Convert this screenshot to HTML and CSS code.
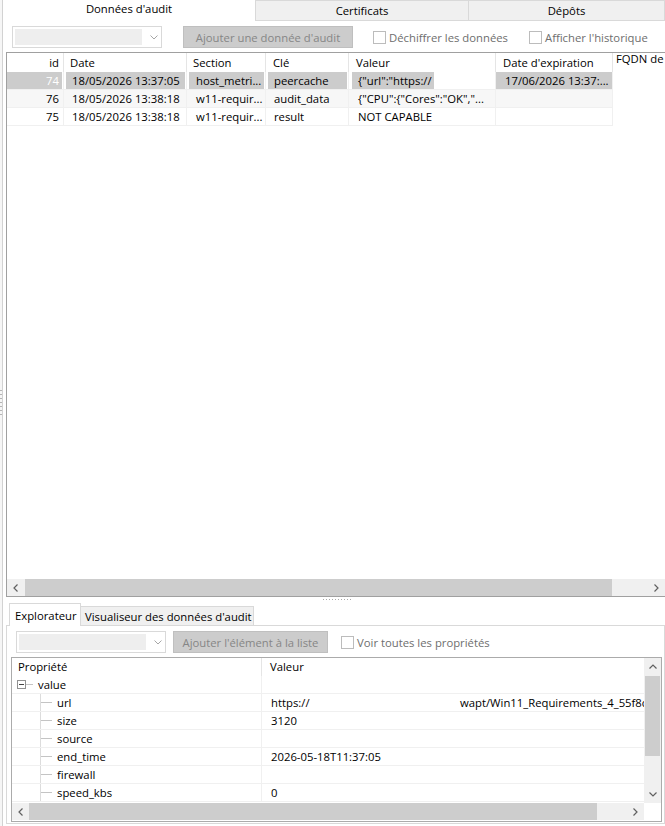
FILE: index.html
```html
<!DOCTYPE html>
<html lang="fr">
<head>
<meta charset="utf-8">
<title>Données d'audit</title>
<link rel="stylesheet" href="styles.css">
</head>
<body>
<div class="window">
  <div class="edge"><div class="grip"></div></div>
  <div class="main">
    <div class="tabs">
      <div class="tab tab-active">Données d'audit</div>
      <div class="tab tab-cert">Certificats</div>
      <div class="tab tab-depots">Dépôts</div>
    </div>

    <div class="toolbar">
      <div class="combo">
        <div class="combo-field"></div>
        <svg class="combo-chev" width="8" height="5" viewBox="0 0 8 5"><polyline points="0.5,0.5 4,4 7.5,0.5" fill="none" stroke="#a6a6a6" stroke-width="1"/></svg>
      </div>
      <div class="btn btn-audit">Ajouter une donnée d'audit</div>
      <div class="check check-decrypt"><span class="box"></span>Déchiffrer les données</div>
      <div class="check"><span class="box"></span>Afficher l'historique</div>
    </div>

    <div class="grid">
      <div class="grid-body">
        <div class="row head">
          <div class="c c-id">id</div>
          <div class="c c-date">Date</div>
          <div class="c c-sec">Section</div>
          <div class="c c-key">Clé</div>
          <div class="c c-val">Valeur</div>
          <div class="c c-exp">Date d'expiration</div>
          <div class="c c-fqdn">FQDN de</div>
        </div>
        <div class="row r sel">
          <div class="c c-id">74</div>
          <div class="c c-date">18/05/2026 13:37:05</div>
          <div class="c c-sec">host_metri...</div>
          <div class="c c-key">peercache</div>
          <div class="c c-val"><span class="hl">{"url":"https://</span></div>
          <div class="c c-exp">17/06/2026 13:37:...</div>
          <div class="c c-fqdn"></div>
        </div>
        <div class="row r alt">
          <div class="c c-id">76</div>
          <div class="c c-date">18/05/2026 13:38:18</div>
          <div class="c c-sec">w11-requir...</div>
          <div class="c c-key">audit_data</div>
          <div class="c c-val">{"CPU":{"Cores":"OK","...</div>
          <div class="c c-exp"></div>
          <div class="c c-fqdn"></div>
        </div>
        <div class="row r">
          <div class="c c-id">75</div>
          <div class="c c-date">18/05/2026 13:38:18</div>
          <div class="c c-sec">w11-requir...</div>
          <div class="c c-key">result</div>
          <div class="c c-val">NOT CAPABLE</div>
          <div class="c c-exp"></div>
          <div class="c c-fqdn"></div>
        </div>
      </div>
      <div class="hscroll">
        <div class="sb-btn"><svg width="5" height="8" viewBox="0 0 5 8"><polyline points="4.5,0.5 1,4 4.5,7.5" fill="none" stroke="#606060" stroke-width="1.2"/></svg></div>
        <div class="sb-thumb top-thumb"></div>
        <div class="sb-fill"></div>
        <div class="sb-btn"><svg width="5" height="8" viewBox="0 0 5 8"><polyline points="0.5,0.5 4,4 0.5,7.5" fill="none" stroke="#606060" stroke-width="1.2"/></svg></div>
      </div>
    </div>

    <div class="splitter"><div class="dots"></div></div>

    <div class="subtabs">
      <div class="subtab subtab-active">Explorateur</div>
      <div class="subtab subtab-viewer">Visualiseur des données d'audit</div>
    </div>

    <div class="panel">
      <div class="toolbar toolbar-sub">
        <div class="combo">
          <div class="combo-field"></div>
          <svg class="combo-chev" width="8" height="5" viewBox="0 0 8 5"><polyline points="0.5,0.5 4,4 7.5,0.5" fill="none" stroke="#a6a6a6" stroke-width="1"/></svg>
        </div>
        <div class="btn btn-add">Ajouter l'élément à la liste</div>
        <div class="check check-all"><span class="box"></span>Voir toutes les propriétés</div>
      </div>

      <div class="tree">
        <div class="tree-main">
          <div class="tr th">
            <div class="p">Propriété</div>
            <div class="v">Valeur</div>
          </div>
          <div class="tr root">
            <div class="p"><span class="expander"></span><span class="root-link"></span>value</div>
            <div class="v"></div>
          </div>
          <div class="tr child">
            <div class="p">url</div>
            <div class="v"><span class="url-host">https://</span>wapt/Win11_Requirements_4_55f8c</div>
          </div>
          <div class="tr child">
            <div class="p">size</div>
            <div class="v">3120</div>
          </div>
          <div class="tr child">
            <div class="p">source</div>
            <div class="v"></div>
          </div>
          <div class="tr child">
            <div class="p">end_time</div>
            <div class="v">2026-05-18T11:37:05</div>
          </div>
          <div class="tr child">
            <div class="p">firewall</div>
            <div class="v"></div>
          </div>
          <div class="tr child">
            <div class="p">speed_kbs</div>
            <div class="v">0</div>
          </div>
        </div>
        <div class="vscroll">
          <div class="vsb-btn"><svg width="8" height="5" viewBox="0 0 8 5"><polyline points="0.5,4.5 4,1 7.5,4.5" fill="none" stroke="#606060" stroke-width="1.2"/></svg></div>
          <div class="vsb-thumb"></div>
          <div class="vsb-fill"></div>
          <div class="vsb-btn"><svg width="8" height="5" viewBox="0 0 8 5"><polyline points="0.5,0.5 4,4 7.5,0.5" fill="none" stroke="#606060" stroke-width="1.2"/></svg></div>
        </div>
        <div class="hscroll tree-hscroll">
          <div class="sb-btn"><svg width="5" height="8" viewBox="0 0 5 8"><polyline points="4.5,0.5 1,4 4.5,7.5" fill="none" stroke="#606060" stroke-width="1.2"/></svg></div>
          <div class="sb-thumb tree-thumb"></div>
          <div class="sb-fill"></div>
          <div class="sb-btn"><svg width="5" height="8" viewBox="0 0 5 8"><polyline points="0.5,0.5 4,4 0.5,7.5" fill="none" stroke="#606060" stroke-width="1.2"/></svg></div>
        </div>
        <div class="corner"></div>
      </div>
    </div>
  </div>
</div>
</body>
</html>
```

FILE: styles.css
```css
* { box-sizing: border-box; }

html, body { margin: 0; padding: 0; }

body {
  width: 665px;
  height: 826px;
  overflow: hidden;
  background: #fff;
  font-family: "Open Sans", "Segoe UI", "Liberation Sans", sans-serif;
  font-size: 11.3px;
  color: #000;
}

.window { display: flex; height: 826px; }

/* left window edge with splitter grip */
.edge {
  flex: none;
  width: 3px;
  background: #f6f6f6;
  border-right: 1px solid #d2d2d2;
  padding-top: 390px;
}
.grip {
  width: 2px;
  height: 26px;
  background: repeating-linear-gradient(to bottom, #b4b4b4 0 1px, transparent 1px 4px);
}

.main {
  flex: none;
  width: 662px;
  display: flex;
  flex-direction: column;
}

/* top tabs */
.tabs { display: flex; height: 21px; flex: none; }
.tab { display: flex; align-items: center; justify-content: center; white-space: nowrap; }
.tab-active { width: 252px; background: #fff; padding-bottom: 4px; }
.tab-cert { width: 214px; background: #f0f0f0; border: 1px solid #d9d9d9; }
.tab-depots { flex: 1; background: #f0f0f0; border: 1px solid #d9d9d9; border-left: none; }

/* toolbars */
.toolbar { display: flex; align-items: flex-start; height: 31px; padding-top: 5px; flex: none; }
.combo {
  margin-left: 9px;
  width: 150px;
  height: 22px;
  border: 1px solid #d9d9d9;
  background: #fff;
  display: flex;
  align-items: center;
  padding: 2px;
}
.combo-field { width: 127px; height: 16px; background: #eeeeee; }
.combo-chev { margin-left: 8px; }

.btn {
  height: 22px;
  background: #cccccc;
  border: 1px solid #bfbfbf;
  color: #868686;
  display: flex;
  align-items: center;
  justify-content: center;
  white-space: nowrap;
}
.btn-audit { margin-left: 21px; width: 170px; }
.btn-add { margin-left: 7px; width: 155px; }

.check { display: flex; align-items: center; height: 22px; color: #6e6e6e; white-space: nowrap; }
.check-decrypt { margin-left: 20px; width: 156px; }
.check-all { margin-left: 13px; }
.box { width: 13px; height: 13px; border: 1px solid #bcbcbc; background: #fff; margin-right: 3px; flex: none; }

/* audit data grid */
.grid {
  flex: none;
  margin-left: 3px;
  width: 660px;
  height: 545px;
  border: 1px solid #a0a0a0;
  display: flex;
  flex-direction: column;
}
.grid-body { flex: 1; overflow: hidden; }

.row { display: grid; grid-template-columns: 57px 123px 79px 83px 147px 117px 1fr; }
.head { height: 19px; }
.head .c {
  border-right: 1px solid #e5e5e5;
  display: flex;
  align-items: center;
  padding-left: 6px;
  white-space: nowrap;
  overflow: hidden;
}
.head .c-id { justify-content: flex-end; padding-left: 0; padding-right: 4px; }
.head .c-key, .head .c-val, .head .c-exp { padding-left: 7px; }
.head .c-fqdn { border-right: none; align-items: flex-start; line-height: 11px; padding-left: 3px; }

.r { height: 18px; }
.r .c {
  border-right: 1px solid #f0f0f0;
  border-bottom: 1px solid #f0f0f0;
  padding-left: 8px;
  line-height: 17px;
  white-space: nowrap;
  overflow: hidden;
}
.r .c-id { text-align: right; padding-left: 0; padding-right: 4px; }
.r .c-sec, .r .c-val, .r .c-exp { padding-left: 9px; }
.r .c-fqdn { border: none; }

.alt .c:not(.c-fqdn) { background: #f7f7f7; }

.sel .c-id { background: linear-gradient(to right, #cccccc calc(100% - 1px), transparent 0); color: #fff; }
.sel .c-date, .sel .c-sec, .sel .c-key {
  background: linear-gradient(to right, transparent 2px, #cccccc 2px, #cccccc calc(100% - 1px), transparent 0);
}
.sel .c-exp { background: linear-gradient(to right, transparent 0, #cccccc 0); }
.sel .c-val { padding-left: 3px; }
.hl { display: inline-block; height: 17px; background: #cccccc; padding: 0 2px 0 6px; }

/* scrollbars */
.hscroll { display: flex; height: 17px; flex: none; background: #f0f0f0; }
.sb-btn { width: 17px; height: 17px; flex: none; display: flex; align-items: center; justify-content: center; }
.sb-thumb { flex: none; height: 17px; background: #cdcdcd; }
.sb-fill { flex: 1; }
.top-thumb { margin-left: 1px; width: 587px; }
.tree-thumb { width: 568px; }

/* splitter */
.splitter { flex: none; height: 6px; display: flex; justify-content: center; padding-top: 2px; }
.dots {
  width: 28px;
  height: 1px;
  margin-left: 6px;
  background: repeating-linear-gradient(to right, #a8a8a8 0 1px, transparent 1px 3px);
}

/* sub tabs */
.subtabs { flex: none; height: 22px; display: flex; align-items: flex-end; padding-left: 6px; }
.subtab { white-space: nowrap; display: flex; align-items: center; }
.subtab-active {
  width: 72px;
  height: 23px;
  margin-bottom: -1px;
  background: #fff;
  border: 1px solid #d9d9d9;
  border-bottom: none;
  padding-left: 5px;
  position: relative;
  z-index: 1;
}
.subtab-viewer {
  width: 173px;
  height: 19px;
  background: #f0f0f0;
  border-top: 1px solid #d9d9d9;
  border-right: 1px solid #d9d9d9;
  padding-left: 4px;
}

/* explorer panel */
.panel {
  flex: none;
  margin-left: 3px;
  width: 659px;
  height: 199px;
  border: 1px solid #d9d9d9;
  background: #fff;
}

.tree {
  margin-left: 4px;
  width: 651px;
  height: 165px;
  border: 1px solid #ababab;
  display: grid;
  grid-template-columns: 1fr 17px;
  grid-template-rows: 145px 17px;
}
.tree-main { overflow: hidden; }

.tr { display: grid; grid-template-columns: 250px 1fr; height: 18px; }
.tr > div { line-height: 17px; white-space: nowrap; overflow: hidden; border-bottom: 1px solid #f0f0f0; }
.tr .p { border-right: 1px solid #f0f0f0; }
.tr .v { padding-left: 9px; }

.th > div { border-bottom: none; line-height: 18px; }
.th .p { padding-left: 6px; border-right-color: #e5e5e5; }
.th .v { padding-left: 8px; }

.root .p { display: flex; align-items: center; padding-left: 5px; }
.expander {
  width: 9px;
  height: 9px;
  border: 1px solid #919191;
  flex: none;
  background: linear-gradient(#444, #444) center / 5px 1px no-repeat #fff;
}
.root-link { width: 7px; height: 1px; margin-right: 5px; background: #c4c4c4; flex: none; }

.child .p {
  padding-left: 45px;
  background:
    linear-gradient(#dcdcdc, #dcdcdc) 28px 0 / 1px 100% no-repeat,
    linear-gradient(#c4c4c4, #c4c4c4) 28px 8px / 12px 1px no-repeat;
}
.url-host { display: inline-block; width: 189px; }

.vscroll { grid-row: 1; grid-column: 2; background: #f0f0f0; display: flex; flex-direction: column; }
.vsb-btn { height: 17px; flex: none; display: flex; align-items: center; justify-content: center; }
.vsb-thumb { flex: none; height: 80px; margin: 1px 1px 0 1px; background: #cdcdcd; }
.vsb-fill { flex: 1; }

.tree-hscroll { grid-row: 2; grid-column: 1; }
.corner { grid-row: 2; grid-column: 2; background: #fff; }
```
